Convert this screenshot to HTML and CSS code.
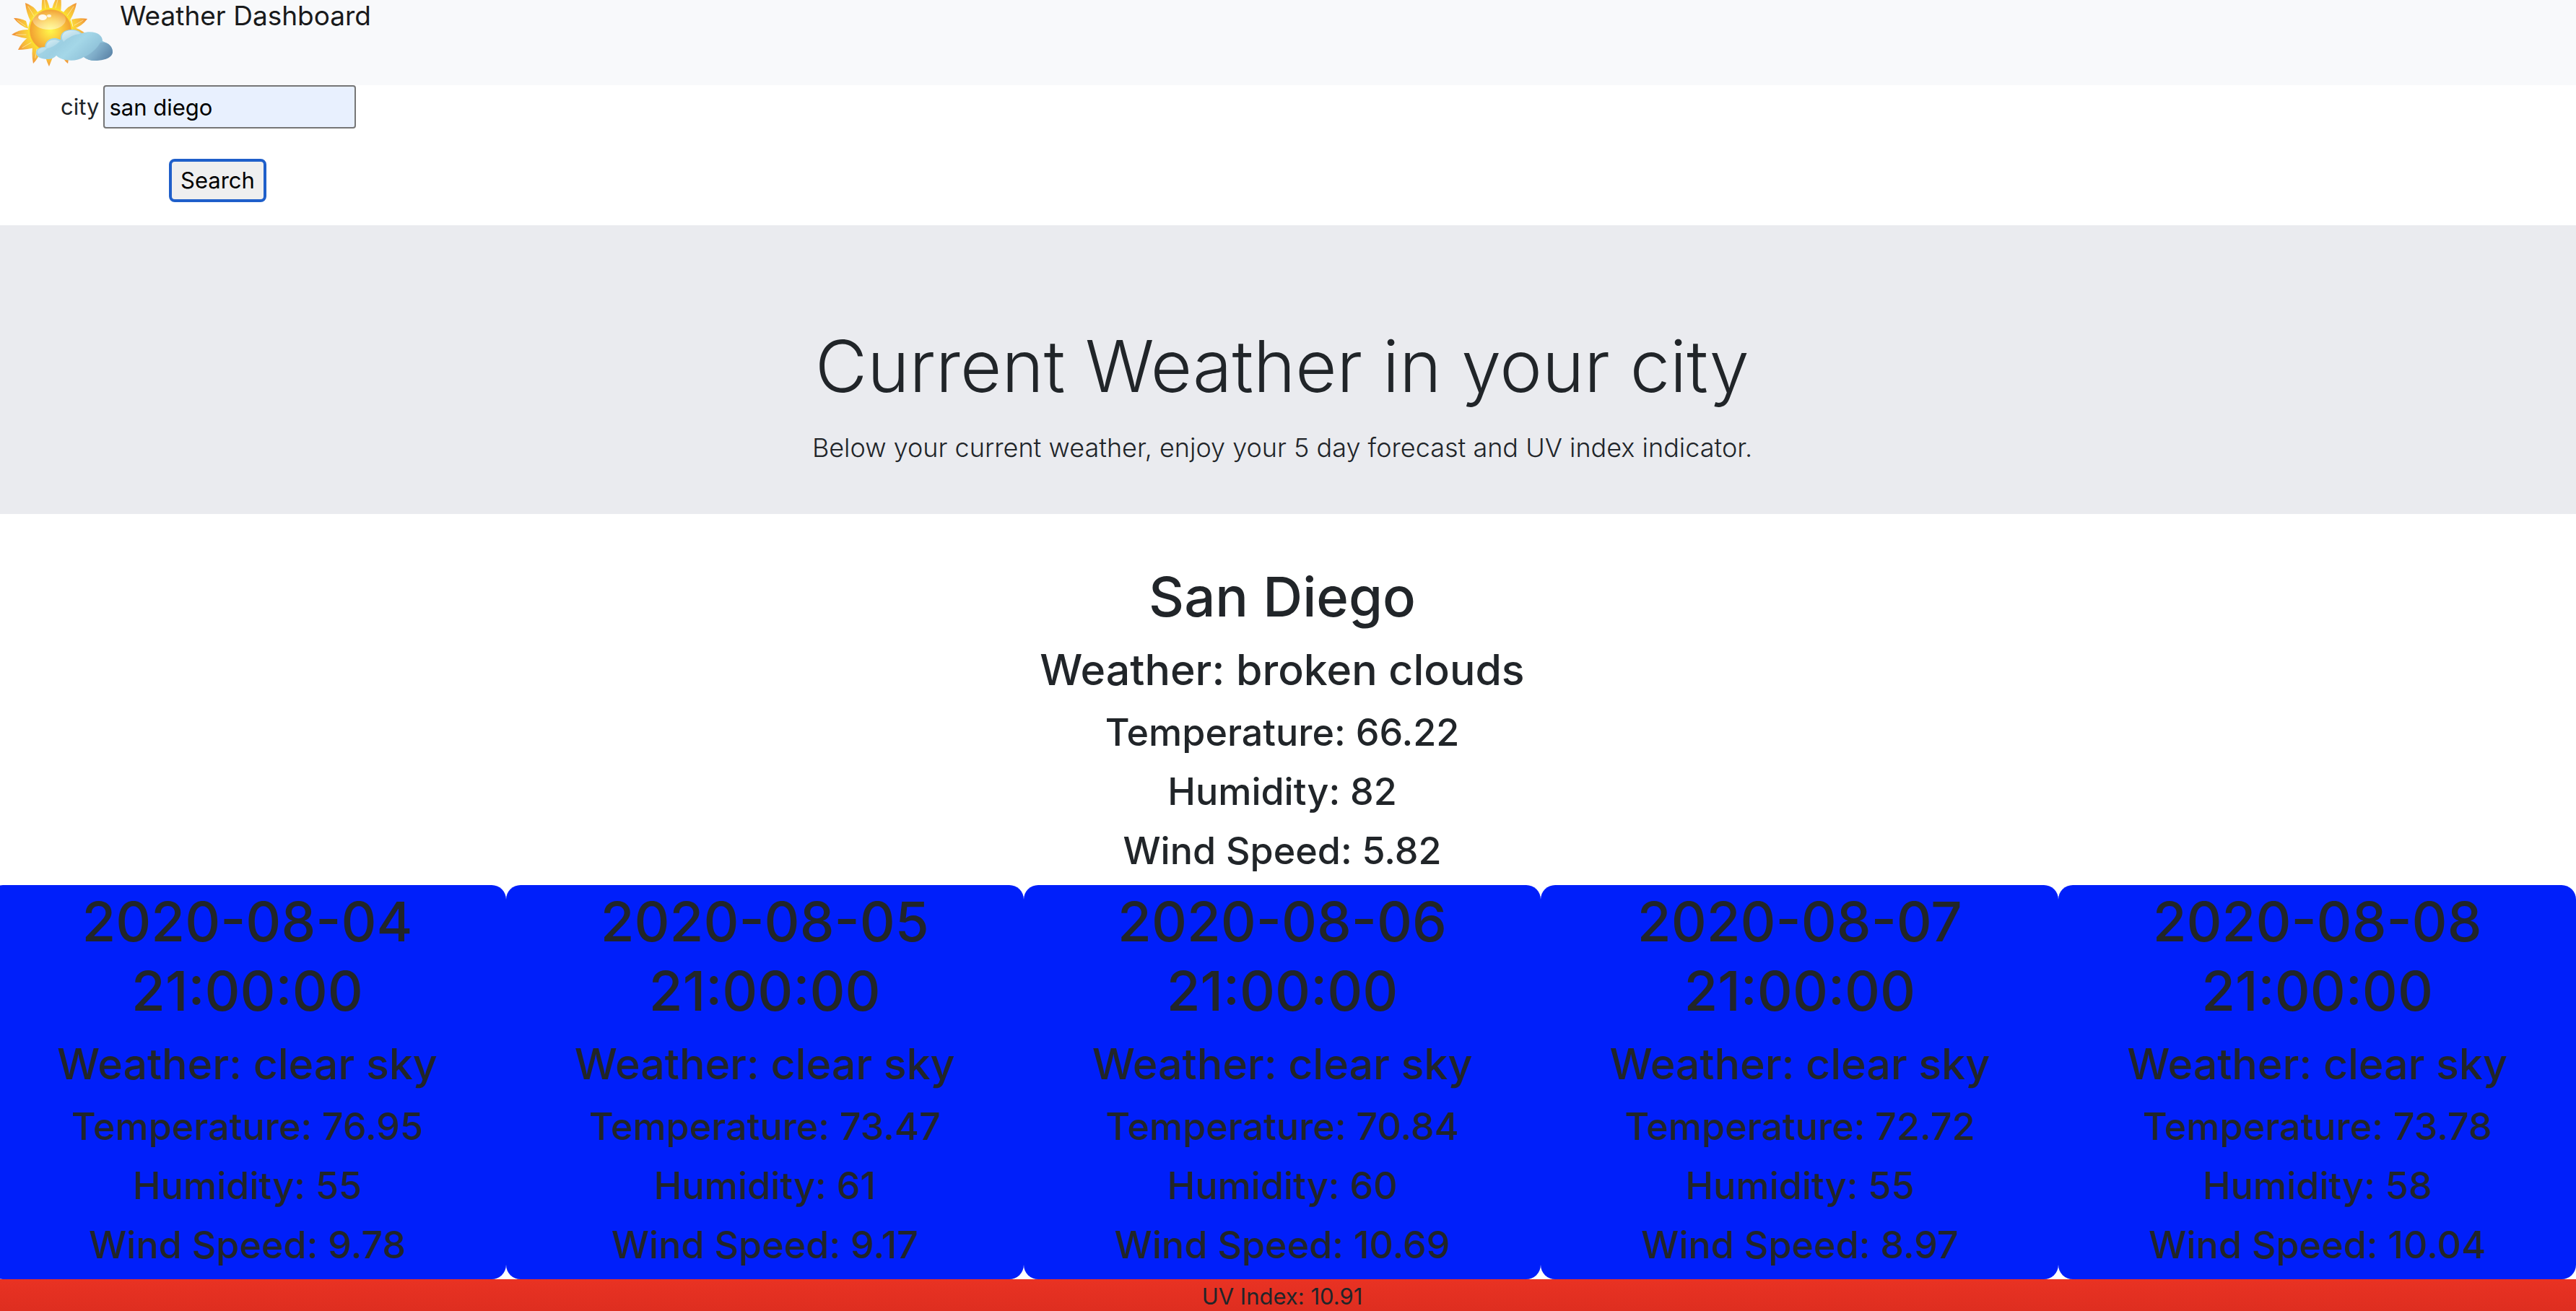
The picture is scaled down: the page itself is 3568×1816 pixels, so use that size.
FILE: index.html
```html
<!DOCTYPE html>
<html lang="en">
<head>
<meta charset="utf-8">
<title>Weather Dashboard</title>
<link rel="stylesheet" href="styles.css">
</head>
<body>
<nav class="navbar">
  <svg class="logo" viewBox="0 0 160 100" aria-hidden="true">
    <defs>
      <radialGradient id="sun" cx="50%" cy="50%" r="50%">
        <stop offset="0" stop-color="#fff84a"/>
        <stop offset=".5" stop-color="#fbcb3e"/>
        <stop offset=".92" stop-color="#f2a332"/>
        <stop offset="1" stop-color="#f6c02f"/>
      </radialGradient>
      <radialGradient id="ray" gradientUnits="userSpaceOnUse" cx="70" cy="42" r="55">
        <stop offset=".55" stop-color="#fcd935"/>
        <stop offset=".8" stop-color="#f5b23e"/>
        <stop offset="1" stop-color="#ee8130"/>
      </radialGradient>
      <linearGradient id="shine" x1="0" y1="0" x2="0" y2="1">
        <stop offset="0" stop-color="#fff" stop-opacity="0"/>
        <stop offset="1" stop-color="#fff" stop-opacity=".5"/>
      </linearGradient>
      <linearGradient id="cloud" gradientUnits="userSpaceOnUse" x1="78" y1="42" x2="128" y2="96">
        <stop offset="0" stop-color="#a5d6e6"/>
        <stop offset=".25" stop-color="#9ccfe2"/>
        <stop offset=".45" stop-color="#a4d7e8"/>
        <stop offset="1" stop-color="#82b4cf"/>
      </linearGradient>
      <linearGradient id="puff" gradientUnits="userSpaceOnUse" x1="118" y1="60" x2="148" y2="84">
        <stop offset="0" stop-color="#9bcde0"/>
        <stop offset=".5" stop-color="#7fadc9"/>
        <stop offset="1" stop-color="#5e87aa"/>
      </linearGradient>
      <linearGradient id="light" x1="0" y1="0" x2=".6" y2=".8">
        <stop offset="0" stop-color="#fff"/>
        <stop offset="1" stop-color="#fff" stop-opacity="0"/>
      </linearGradient>
    </defs>
    <g fill="url(#ray)">
      <path d="M40 42L36 29Q28 25 19 25Q27 36 40 40Z"/>
      <path d="M43 31L53 18Q47 8 35 4Q36 17 43 31Z"/>
      <path d="M56 17L69 12Q66 0 60 -10Q57 2 58 17Z"/>
      <path d="M72 12L84 17Q86 3 83 -10Q75 0 72 12Z"/>
      <path d="M87 18L97 28Q104 16 106 4Q94 8 87 18Z"/>
      <path d="M99 27L102 40Q114 36 121 26Q109 24 99 27Z"/>
      <path d="M40 41L41 54Q28 52 16 48Q27 40 40 41Z"/>
      <path d="M40 51L51 65Q38 69 25 69Q30 58 40 51Z"/>
      <path d="M46 60L58 67Q54 80 46 88Q43 74 46 60Z"/>
      <path d="M62 68L76 68Q73 81 68 92Q62 81 62 68Z"/>
      <path d="M82 68L96 68Q96 79 94 88Q86 82 82 68Z"/>
      <path d="M98 36L105 50L119 47Q111 40 98 36Z"/>
    </g>
    <g fill="none" stroke="#fff6cc" stroke-opacity=".6" stroke-linecap="round">
      <path d="M24 28L35 36M39 9L47 22M61 -4L63 12M81 -4L77 11M102 9L93 22M115 28L103 35M22 48L36 48M31 66L43 59M49 80L51 68"/>
    </g>
    <circle cx="70" cy="42" r="30" fill="url(#sun)" stroke="#fbe12e" stroke-width="2"/>
    <ellipse cx="68" cy="27" rx="23" ry="14" fill="url(#shine)"/>
    <ellipse cx="59" cy="24" rx="6" ry="4" fill="#fff" fill-opacity=".9"/>
    <ellipse cx="68" cy="22" rx="3" ry="2" fill="#fff" fill-opacity=".8"/>
    <path fill="url(#cloud)" d="M66 82C56 82 50 78 50 73C50 68 55 65 62 65C63 56 71 52 78 53L84 55C83 46 89 41 99 41C106 41 110 43 113 46C130 41 142 47 142 57C150 60 156 64 156 72C154 80 142 83 131 84Q122 84 116 79C106 86 86 85 78 77Q74 82 66 82Z"/>
    <path fill="url(#puff)" d="M139 59C149 57 156 64 156 72C156 80 144 84 132 84Q122 84 116 79C124 76 134 68 139 59Z"/>
    <path fill="url(#light)" d="M52 72C53 66 61 65 66 66Q59 74 53 75ZM64 64C65 56 74 53 83 57Q74 66 65 67ZM86 54C85 44 93 42 100 42C106 42 110 44 111 47Q98 48 88 58Z"/>
  </svg>
  <span class="brand">Weather Dashboard</span>
</nav>
<form class="search">
  <div class="field">
    <label for="city">city</label>
    <input id="city" type="text" value="san diego">
  </div>
  <button class="go" type="button">Search</button>
</form>
<main class="content">
  <header class="jumbotron">
    <h1 class="display">Current Weather in your city</h1>
    <p class="lead">Below your current weather, enjoy your 5 day forecast and UV index indicator.</p>
  </header>
  <section class="report">
    <h1>San Diego</h1>
    <h2>Weather: broken clouds</h2>
    <h3>Temperature: 66.22</h3>
    <h3>Humidity: 82</h3>
    <h3>Wind Speed: 5.82</h3>
  </section>
  <section class="forecast">
    <article class="report card">
      <h1>2020-08-04 21:00:00</h1>
      <h2>Weather: clear sky</h2>
      <h3>Temperature: 76.95</h3>
      <h3>Humidity: 55</h3>
      <h3>Wind Speed: 9.78</h3>
    </article>
    <article class="report card">
      <h1>2020-08-05 21:00:00</h1>
      <h2>Weather: clear sky</h2>
      <h3>Temperature: 73.47</h3>
      <h3>Humidity: 61</h3>
      <h3>Wind Speed: 9.17</h3>
    </article>
    <article class="report card">
      <h1>2020-08-06 21:00:00</h1>
      <h2>Weather: clear sky</h2>
      <h3>Temperature: 70.84</h3>
      <h3>Humidity: 60</h3>
      <h3>Wind Speed: 10.69</h3>
    </article>
    <article class="report card">
      <h1>2020-08-07 21:00:00</h1>
      <h2>Weather: clear sky</h2>
      <h3>Temperature: 72.72</h3>
      <h3>Humidity: 55</h3>
      <h3>Wind Speed: 8.97</h3>
    </article>
    <article class="report card">
      <h1>2020-08-08 21:00:00</h1>
      <h2>Weather: clear sky</h2>
      <h3>Temperature: 73.78</h3>
      <h3>Humidity: 58</h3>
      <h3>Wind Speed: 10.04</h3>
    </article>
  </section>
  <footer class="uv">UV Index: 10.91</footer>
</main>
</body>
</html>
```
FILE: styles.css
```css
* {
  box-sizing: border-box;
}

body {
  margin: 0;
  background: #fff;
  color: #212529;
  font-family: Inter, "Liberation Sans", sans-serif;
  font-size: 31px;
  line-height: 48px;
}

h1, h2, h3, p {
  margin: 0;
}

.navbar {
  display: flex;
  align-items: flex-start;
  gap: 6px;
  height: 118px;
  background: #f8f9fb;
}

.logo {
  width: 160px;
  height: 100px;
}

.brand {
  color: #191a1b;
  font-size: 37px;
  line-height: 44px;
}

.search {
  display: flex;
  flex-direction: column;
  align-items: flex-start;
  gap: 42px;
  padding: 0 84px 32px;
}

.field {
  display: flex;
  align-items: center;
  gap: 6px;
}

.field input {
  width: 350px;
  height: 60px;
  padding: 2px 6px;
  border: 2px solid #767676;
  border-radius: 4px;
  background: #e8f0fe;
  color: #000;
  font: inherit;
}

.go {
  height: 60px;
  margin-left: 150px;
  padding: 0 12px;
  border: 4px solid #1f5fca;
  border-radius: 8px;
  background: #efefef;
  color: #000;
  font: inherit;
}

.content {
  margin-left: -16px;
  text-align: center;
}

.jumbotron {
  margin-bottom: 64px;
  padding: 128px 32px 62px;
  background: #eaebef;
}

.display {
  margin-bottom: 16px;
  font-size: 99px;
  font-weight: 300;
  line-height: 134px;
}

.lead {
  font-size: 36px;
  font-weight: 300;
  line-height: 60px;
}

.report h1,
.report h2,
.report h3 {
  padding: 2px 0 14px;
  font-weight: 500;
}

.report h1 {
  font-size: 76px;
  line-height: 96px;
}

.report h2 {
  font-size: 59px;
  line-height: 76px;
}

.report h3 {
  font-size: 52px;
  line-height: 66px;
}

.forecast {
  display: grid;
  grid-template-columns: repeat(5, 1fr);
}

.card {
  padding: 0 80px;
  border-radius: 20px;
  background: #001ffa;
}

.card h2,
.card h3 {
  margin: 0 -80px;
}

.uv {
  padding-top: 4px;
  background: linear-gradient(#e93223, #de2e20);
  line-height: 40px;
}
```
